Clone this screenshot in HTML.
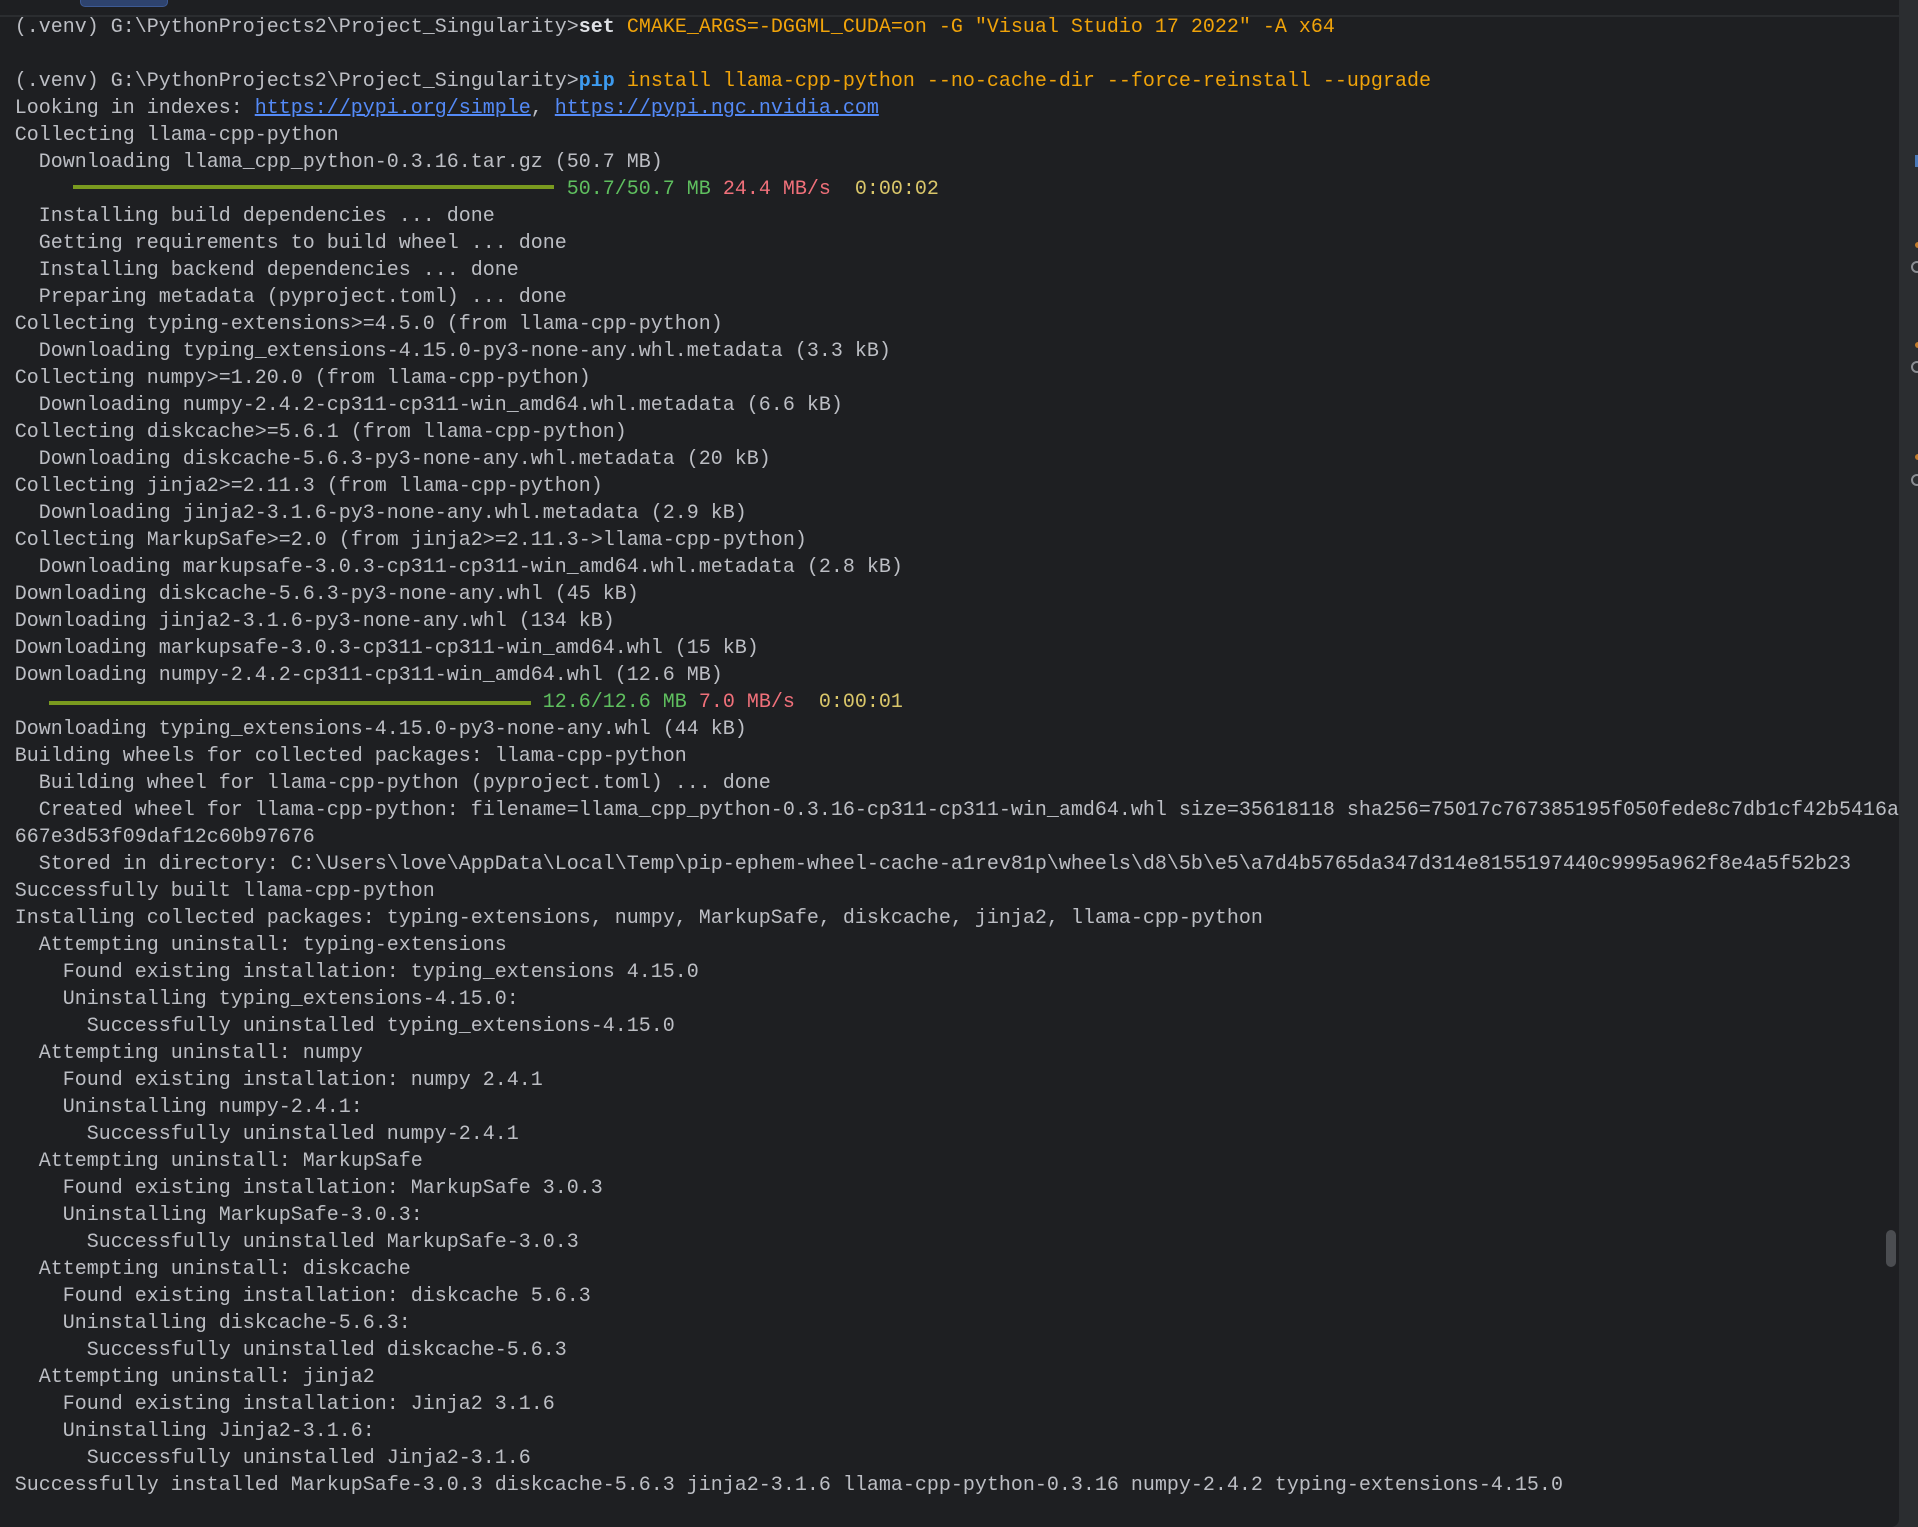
<!DOCTYPE html>
<html><head><meta charset="utf-8"><style>
html,body{margin:0;padding:0;}
body{width:1918px;height:1527px;background:#2b2d30;position:relative;overflow:hidden;font-family:"Liberation Mono",monospace;}
#main{position:absolute;left:0;top:0;width:1899px;height:1527px;background:#1e1f22;border-bottom-right-radius:8px;}
#topline{position:absolute;left:0;top:15px;width:1899px;height:2px;background:#2b2d30;}
#tab{position:absolute;left:80px;top:-5px;width:86px;height:10px;background:#2e436e;border:1px solid #3d5a94;border-radius:5px;}
pre{position:absolute;left:14.7px;top:13.5px;margin:0;font-family:"Liberation Mono",monospace;font-size:20px;line-height:27px;color:#bcbec4;white-space:pre;}
.o{color:#f0a30a}.b{color:#3d9bf0;font-weight:bold}.w{color:#dfe1e5;font-weight:bold}
.l{color:#548af7;text-decoration:underline}
.g{color:#5fbf5f}.r{color:#f0707a}.y{color:#d9c66a}
.bar{position:absolute;height:4px;background:#7a9a1f;}
#sb{position:absolute;left:1886px;top:1230px;width:10px;height:37px;background:#4b4d51;border-radius:5px;}
.ic{position:absolute;width:8px;height:8px;border:2px solid #8a8d92;border-radius:50%;left:1911px;}
.io{position:absolute;width:6px;height:6px;background:#c07a2a;border-radius:50%;left:1915px;}
</style></head><body>
<div id="main"></div>
<div id="tab"></div>
<div id="topline"></div>
<div style="position:absolute;left:1915px;top:155px;width:3px;height:12px;background:#4a78b8"></div>
<div class="io" style="top:242px"></div><div class="ic" style="top:261px"></div>
<div class="io" style="top:342px"></div><div class="ic" style="top:361px"></div>
<div class="io" style="top:454px"></div><div class="ic" style="top:474px"></div>
<div id="sb"></div>
<div class="bar" style="left:73px;width:481px;top:185px"></div>
<div class="bar" style="left:49px;width:482px;top:701px"></div>
<pre>(.venv) G:\PythonProjects2\Project_Singularity&gt;<span class="w">set</span> <span class="o">CMAKE_ARGS=-DGGML_CUDA=on -G "Visual Studio 17 2022" -A x64</span>

(.venv) G:\PythonProjects2\Project_Singularity&gt;<span class="b">pip</span> <span class="o">install llama-cpp-python --no-cache-dir --force-reinstall --upgrade</span>
Looking in indexes: <span class="l">https://pypi.org/simple</span>, <span class="l">https://pypi.ngc.nvidia.com</span>
Collecting llama-cpp-python
  Downloading llama_cpp_python-0.3.16.tar.gz (50.7 MB)
                                              <span class="g">50.7/50.7 MB</span> <span class="r">24.4 MB/s</span>  <span class="y">0:00:02</span>
  Installing build dependencies ... done
  Getting requirements to build wheel ... done
  Installing backend dependencies ... done
  Preparing metadata (pyproject.toml) ... done
Collecting typing-extensions&gt;=4.5.0 (from llama-cpp-python)
  Downloading typing_extensions-4.15.0-py3-none-any.whl.metadata (3.3 kB)
Collecting numpy&gt;=1.20.0 (from llama-cpp-python)
  Downloading numpy-2.4.2-cp311-cp311-win_amd64.whl.metadata (6.6 kB)
Collecting diskcache&gt;=5.6.1 (from llama-cpp-python)
  Downloading diskcache-5.6.3-py3-none-any.whl.metadata (20 kB)
Collecting jinja2&gt;=2.11.3 (from llama-cpp-python)
  Downloading jinja2-3.1.6-py3-none-any.whl.metadata (2.9 kB)
Collecting MarkupSafe&gt;=2.0 (from jinja2&gt;=2.11.3-&gt;llama-cpp-python)
  Downloading markupsafe-3.0.3-cp311-cp311-win_amd64.whl.metadata (2.8 kB)
Downloading diskcache-5.6.3-py3-none-any.whl (45 kB)
Downloading jinja2-3.1.6-py3-none-any.whl (134 kB)
Downloading markupsafe-3.0.3-cp311-cp311-win_amd64.whl (15 kB)
Downloading numpy-2.4.2-cp311-cp311-win_amd64.whl (12.6 MB)
                                            <span class="g">12.6/12.6 MB</span> <span class="r">7.0 MB/s</span>  <span class="y">0:00:01</span>
Downloading typing_extensions-4.15.0-py3-none-any.whl (44 kB)
Building wheels for collected packages: llama-cpp-python
  Building wheel for llama-cpp-python (pyproject.toml) ... done
  Created wheel for llama-cpp-python: filename=llama_cpp_python-0.3.16-cp311-cp311-win_amd64.whl size=35618118 sha256=75017c767385195f050fede8c7db1cf42b5416a
667e3d53f09daf12c60b97676
  Stored in directory: C:\Users\love\AppData\Local\Temp\pip-ephem-wheel-cache-a1rev81p\wheels\d8\5b\e5\a7d4b5765da347d314e8155197440c9995a962f8e4a5f52b23
Successfully built llama-cpp-python
Installing collected packages: typing-extensions, numpy, MarkupSafe, diskcache, jinja2, llama-cpp-python
  Attempting uninstall: typing-extensions
    Found existing installation: typing_extensions 4.15.0
    Uninstalling typing_extensions-4.15.0:
      Successfully uninstalled typing_extensions-4.15.0
  Attempting uninstall: numpy
    Found existing installation: numpy 2.4.1
    Uninstalling numpy-2.4.1:
      Successfully uninstalled numpy-2.4.1
  Attempting uninstall: MarkupSafe
    Found existing installation: MarkupSafe 3.0.3
    Uninstalling MarkupSafe-3.0.3:
      Successfully uninstalled MarkupSafe-3.0.3
  Attempting uninstall: diskcache
    Found existing installation: diskcache 5.6.3
    Uninstalling diskcache-5.6.3:
      Successfully uninstalled diskcache-5.6.3
  Attempting uninstall: jinja2
    Found existing installation: Jinja2 3.1.6
    Uninstalling Jinja2-3.1.6:
      Successfully uninstalled Jinja2-3.1.6
Successfully installed MarkupSafe-3.0.3 diskcache-5.6.3 jinja2-3.1.6 llama-cpp-python-0.3.16 numpy-2.4.2 typing-extensions-4.15.0</pre>
</body></html>
